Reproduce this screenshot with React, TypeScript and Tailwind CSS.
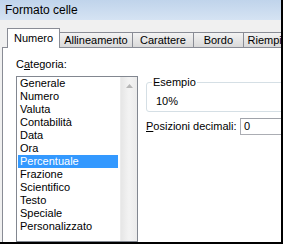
import type { ReactNode } from 'react'

const categorie = [
  'Generale',
  'Numero',
  'Valuta',
  'Contabilità',
  'Data',
  'Ora',
  'Percentuale',
  'Frazione',
  'Scientifico',
  'Testo',
  'Speciale',
  'Personalizzato',
]

function Tab({ label, width, selected }: { label: string; width: string; selected?: boolean }) {
  if (selected) {
    return (
      <div className={`${width} relative z-10 -mb-px h-[20px] bg-white border border-b-0 border-[#898c95] flex items-center justify-center pb-[1px]`}>
        {label}
      </div>
    )
  }
  return (
    <div className={`${width} h-[15px] pt-[1px] bg-gradient-to-b from-[#f3f3f3] to-[#d9d9d9] border-t border-r border-[#898c95] flex items-center justify-center whitespace-nowrap overflow-hidden`}>
      {label}
    </div>
  )
}

function UpArrow() {
  return (
    <svg width="7" height="4" viewBox="0 0 7 4">
      <path d="M0 4 L3.5 0 L7 4 Z" fill="#b6b6b6" />
    </svg>
  )
}

function Label({ children }: { children: ReactNode }) {
  return <span className="leading-[13px] whitespace-nowrap">{children}</span>
}

export default function App() {
  return (
    <div className="w-[283px] h-[244px] overflow-hidden bg-[#f0f0f0] border-r-2 border-b-2 border-black flex flex-col text-black text-[11px] font-['Liberation_Sans',Arial,sans-serif]">
      <div className="h-[20px] shrink-0 bg-gradient-to-b from-[#c0d4eb] to-[#d5e3f3] pl-[5px] text-[12px] leading-[20px]">
        Formato celle
      </div>

      <div className="flex-1 min-h-0 flex flex-col pl-[2px] pt-[8px]">
        <div className="h-[19px] shrink-0 flex items-end pl-[5px]">
          <Tab label="Numero" width="w-[57px]" selected />
          <Tab label="Allineamento" width="w-[78px]" />
          <Tab label="Carattere" width="w-[66px]" />
          <Tab label="Bordo" width="w-[53px]" />
          <div className="w-[40px] h-[15px] pt-[1px] bg-gradient-to-b from-[#f3f3f3] to-[#d9d9d9] border-t border-[#898c95] flex items-center pl-[4px] whitespace-nowrap overflow-hidden">
            Riempimento
          </div>
        </div>

        <div className="flex-1 min-h-0 bg-white border-t border-l border-[#898c95] flex">
          <div className="pl-[13px] pt-[10px] flex flex-col shrink-0">
            <div className="h-[13px] flex items-center">
              <Label>
                C<span className="underline">a</span>tegoria:
              </Label>
            </div>
            <div className="mt-[5px] w-[122px] h-[200px] border border-[#828790] flex">
              <div className="w-[103px] pl-px flex flex-col">
                {categorie.map((c) => (
                  <div
                    key={c}
                    className={`w-[100px] h-[13px] pl-[2px] leading-[13px] whitespace-nowrap ${c === 'Percentuale' ? 'bg-[#3399ff] text-white' : ''}`}
                  >
                    {c}
                  </div>
                ))}
              </div>
              <div className="w-[17px] flex flex-col bg-gradient-to-r from-[#e6e6e6] via-[#f3f3f3] to-[#ebebeb] border-l border-[#ececec]">
                <div className="h-[17px] flex items-center justify-center">
                  <UpArrow />
                </div>
              </div>
            </div>
          </div>

          <div className="ml-[8px] flex flex-col shrink-0">
            <fieldset className="mt-[28px] w-[150px] border border-[#d5dfe5] rounded-[3px] pl-[5px] pb-[3px]">
              <legend className="px-px leading-[13px]">Esempio</legend>
              <div className="mt-[6px] ml-[4px] leading-[13px]">10%</div>
            </fieldset>

            <div className="mt-[6px] flex items-center h-[17px]">
              <div className="w-[94px]">
                <Label>
                  <span className="underline">P</span>osizioni decimali:
                </Label>
              </div>
              <div className="w-[60px] h-[17px] border border-[#abadb3] border-t-[#a0a3aa] flex items-center pl-[3px] leading-[13px]">
                0
              </div>
            </div>
          </div>
        </div>
      </div>
    </div>
  )
}
